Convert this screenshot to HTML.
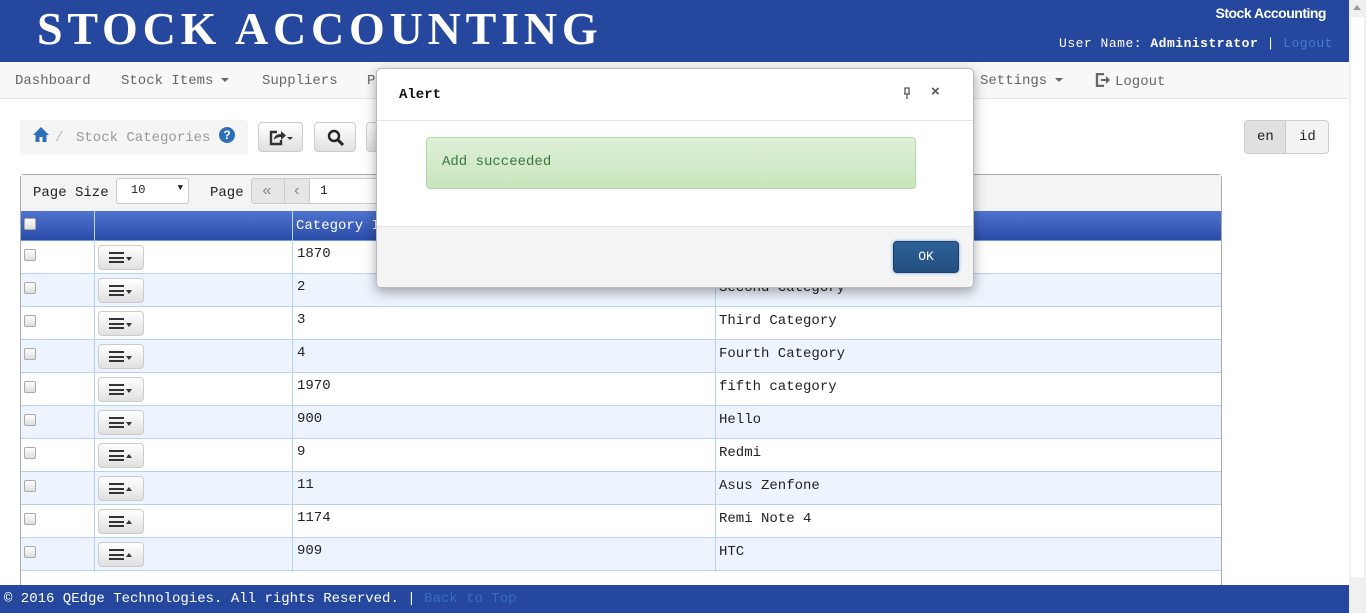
<!DOCTYPE html>
<html><head><meta charset="utf-8"><style>
*{box-sizing:border-box;margin:0;padding:0}
body{width:1366px;height:613px;overflow:hidden;background:#fff;font-family:"Liberation Mono",monospace;font-size:14px;color:#222;position:relative}
.abs{position:absolute}
#hdr{left:0;top:0;width:1349px;height:62px;background:#25479e}
#title{left:37px;top:2px;font-family:"Liberation Serif",serif;font-weight:bold;font-size:46px;color:#fff;letter-spacing:4.8px}
#sa{right:40px;top:5px;font-family:"Liberation Sans",sans-serif;font-weight:bold;font-size:14px;color:#fff;letter-spacing:-0.5px}
#user{right:33px;top:36px;color:#fff;font-size:13px;letter-spacing:0.5px}
#nav{left:0;top:62px;width:1349px;height:37px;background:#f8f8f8;border-bottom:1px solid #e4e4e4}
.ni{top:73px;color:#666;font-size:14px}
.caret{display:inline-block;width:0;height:0;border-left:4px solid transparent;border-right:4px solid transparent;border-top:4px solid #666;vertical-align:middle;margin-left:8px}
#bc{left:20px;top:120px;width:228px;height:35px;background:#f5f5f5;border-radius:4px}
.btn{background:linear-gradient(#fff,#e0e0e0);border:1px solid #ccc;border-radius:4px}
#grid{left:20px;top:174px;width:1202px;height:420px;border:1px solid #aaa;border-bottom:none;border-radius:4px 4px 0 0;background:#fff}
#tb{left:21px;top:175px;width:1200px;height:36px;background:#f4f4f4}
#th{left:21px;top:211px;width:1200px;height:30px;background:linear-gradient(#4f74d0,#2a4ca8);border-bottom:1px solid #6c9ae0}
.row{left:21px;width:1200px;height:33px;border-bottom:1px solid #b9d2ee}
.vl{width:1px;background:#b9d2ee;top:211px;height:361px}
.cb{width:12px;height:12px;border:1px solid #aaa;border-radius:2px;background:linear-gradient(#fff,#ddd)}
.mb{width:46px;height:25px}
.ham{position:absolute;left:10px;top:6px;width:15px;height:11px;border-top:2px solid #333;border-bottom:2px solid #333}
.ham:after{content:"";position:absolute;left:0;top:2.5px;width:15px;height:2px;background:#333}
.tri{position:absolute;left:27px;top:11px;border-left:3.5px solid transparent;border-right:3.5px solid transparent}
.cell{font-size:14px;color:#222}
#foot{left:0;top:585px;width:1349px;height:28px;background:#25479e;color:#fff;padding:6px 4px;font-size:14px}
#sb{left:1349px;top:0;width:17px;height:613px;background:#f0f0f0}
#modal{left:376px;top:68px;width:598px;height:220px;background:#fff;border:1px solid #bbb;border-radius:5px;box-shadow:0 4px 12px rgba(0,0,0,.35);overflow:hidden}
</style></head><body>
<div id="hdr" class="abs"></div>
<div id="title" class="abs">STOCK ACCOUNTING</div>
<div id="sa" class="abs">Stock Accounting</div>
<div id="user" class="abs">User Name: <b>Administrator</b> | <span style="color:#4a7ccc">Logout</span></div>
<div id="nav" class="abs"></div>
<div class="abs ni" style="left:15px">Dashboard</div>
<div class="abs ni" style="left:121px">Stock Items<span class="caret"></span></div>
<div class="abs ni" style="left:262px">Suppliers</div>
<div class="abs ni" style="left:367px">P</div>
<div class="abs ni" style="left:980px">Settings<span class="caret"></span></div>
<div class="abs ni" style="left:1095px"><svg width="16" height="14" viewBox="0 0 16 14" style="vertical-align:-2px;margin-right:4px"><path d="M9 1H2v12h7" fill="none" stroke="#666" stroke-width="2.4"/><path d="M6 6h5V3l4 4-4 4V8H6z" fill="#666"/></svg>Logout</div>
<div id="bc" class="abs"></div>
<svg class="abs" style="left:32px;top:126px" width="18" height="17" viewBox="0 0 18 17"><path d="M9 1L1 9h2.5v7h4v-5h3v5h4V9H17z" fill="#2e6fba"/></svg>
<div class="abs" style="left:55px;top:130px;color:#bbb">/</div>
<div class="abs" style="left:76px;top:130px;color:#999">Stock Categories</div>
<div class="abs" style="left:219px;top:127px;width:16px;height:16px;border-radius:50%;background:#2e6fba;color:#fff;font:bold 12px 'Liberation Sans',sans-serif;text-align:center;line-height:16px">?</div>
<div class="abs btn" style="left:258px;top:122px;width:45px;height:30px"><svg width="26" height="18" viewBox="0 0 26 18" style="position:absolute;left:9px;top:6px"><path d="M9 3H3v12h10v-4" fill="none" stroke="#333" stroke-width="2.4"/><path d="M6 11c0-5 4-6 7-6V2l5 4.5-5 4.5V8c-3 0-5 1-7 3z" fill="#333"/><path d="M19 8h6l-3 3z" fill="#333"/></svg></div>
<div class="abs btn" style="left:314px;top:122px;width:42px;height:30px"><svg width="18" height="18" viewBox="0 0 18 18" style="position:absolute;left:12px;top:6px"><circle cx="7" cy="7" r="5" fill="none" stroke="#222" stroke-width="2.4"/><path d="M10.5 10.5L16 16" stroke="#222" stroke-width="3"/></svg></div>
<div class="abs btn" style="left:366px;top:122px;width:20px;height:30px"></div>
<div class="abs" style="left:1244px;top:120px;width:85px;height:34px;border:1px solid #ccc;border-radius:4px;background:#f3f3f3;overflow:hidden"><div style="position:absolute;left:0;top:0;width:41px;height:32px;background:#e0e0e0;border-right:1px solid #ccc"></div><span style="position:absolute;left:12px;top:8px">en</span><span style="position:absolute;left:54px;top:8px">id</span></div>
<div id="grid" class="abs"></div>
<div id="tb" class="abs"></div>
<div class="abs" style="left:33px;top:185px">Page Size</div>
<div class="abs" style="left:116px;top:178px;width:73px;height:26px;border:1px solid #ccc;border-radius:3px;background:#fff;font-size:12px;padding:4px 14px">10<span style="position:absolute;right:5px;top:4px;font-size:9px">▼</span></div>
<div class="abs" style="left:210px;top:185px">Page</div>
<div class="abs" style="left:251px;top:178px;width:130px;height:26px;border:1px solid #ccc;border-radius:3px;background:#fff;overflow:hidden"><div style="position:absolute;left:0;top:0;width:57px;height:26px;background:#e6e6e6"></div><div style="position:absolute;left:32px;top:0;width:1px;height:26px;background:#ccc"></div><div style="position:absolute;left:57px;top:0;width:1px;height:26px;background:#ccc"></div><span style="position:absolute;left:10px;top:3px;color:#888;font-size:16px">«</span><span style="position:absolute;left:40px;top:3px;color:#888;font-size:16px">‹</span><span style="position:absolute;left:68px;top:4px;font-size:13px">1</span></div>
<div id="th" class="abs"></div>
<div class="abs cb" style="left:24px;top:218px"></div>
<div class="abs" style="left:296px;top:218px;color:#fff">Category Id</div>
<div class="abs vl" style="left:94px;z-index:1"></div>
<div class="abs vl" style="left:292px;z-index:1"></div>
<div class="abs vl" style="left:715px;z-index:1"></div>
<script>
var d=[["1870","First Category"],["2","Second Category"],["3","Third Category"],["4","Fourth Category"],["1970","fifth category"],["900","Hello"],["9","Redmi"],["11","Asus Zenfone"],["1174","Remi Note 4"],["909","HTC"]];
var h="";
d.forEach(function(r,i){var y=241+33*i;var up=i>=6;
h+='<div class="abs row" style="top:'+y+'px;background:'+(i%2?'#edf4fd':'#fff')+'"></div>';
h+='<div class="abs cb" style="left:24px;top:'+(y+8)+'px"></div>';
h+='<div class="abs btn mb" style="left:98px;top:'+(y+4)+'px"><div class="ham"></div><div class="tri" style="'+(up?'border-bottom:4px solid #333;top:10px':'border-top:4px solid #333')+'"></div></div>';
h+='<div class="abs cell" style="left:297px;top:'+(y+5)+'px">'+r[0]+'</div>';
h+='<div class="abs cell" style="left:719px;top:'+(y+6)+'px">'+r[1]+'</div>';});
document.write(h);
</script>
<div id="foot" class="abs">© 2016 QEdge Technologies. All rights Reserved. | <span style="color:#3a6cc0">Back to Top</span></div>
<div id="sb" class="abs"><div style="position:absolute;left:2px;top:17px;width:13px;height:560px;background:#fff"></div><div style="position:absolute;left:4px;top:5px;border-left:4px solid transparent;border-right:4px solid transparent;border-bottom:5px solid #999"></div></div>
<div id="modal" class="abs" style="z-index:5">
<div style="position:absolute;left:0;top:0;width:598px;height:52px;border-bottom:1px solid #e5e5e5"></div>
<div style="position:absolute;left:22px;top:18px;font-weight:bold;color:#111">Alert</div>
<svg style="position:absolute;left:526px;top:18px" width="8" height="12" viewBox="0 0 8 12"><path d="M2 1h4v6H2zM1 7h6M4 7v5" fill="none" stroke="#555" stroke-width="1.3"/></svg>
<div style="position:absolute;left:554px;top:14px;font:bold 15px 'Liberation Sans',sans-serif;color:#555">×</div>
<div style="position:absolute;left:49px;top:68px;width:490px;height:52px;border:1px solid #b2dba1;border-radius:4px;background:linear-gradient(#dff0d8,#c8e5bc);color:#3c763d;padding:16px 15px">Add succeeded</div>
<div style="position:absolute;left:0;top:157px;width:598px;height:63px;background:#f4f4f4;border-top:1px solid #e5e5e5"></div>
<div style="position:absolute;left:516px;top:172px;width:66px;height:32px;border:1px solid #1d3f6b;border-radius:4px;background:linear-gradient(#2c6196,#244f80);color:#fff;text-align:center;line-height:30px;box-shadow:0 0 3px #6fa0e0;font-size:13px">OK</div>
</div>
</body></html>
